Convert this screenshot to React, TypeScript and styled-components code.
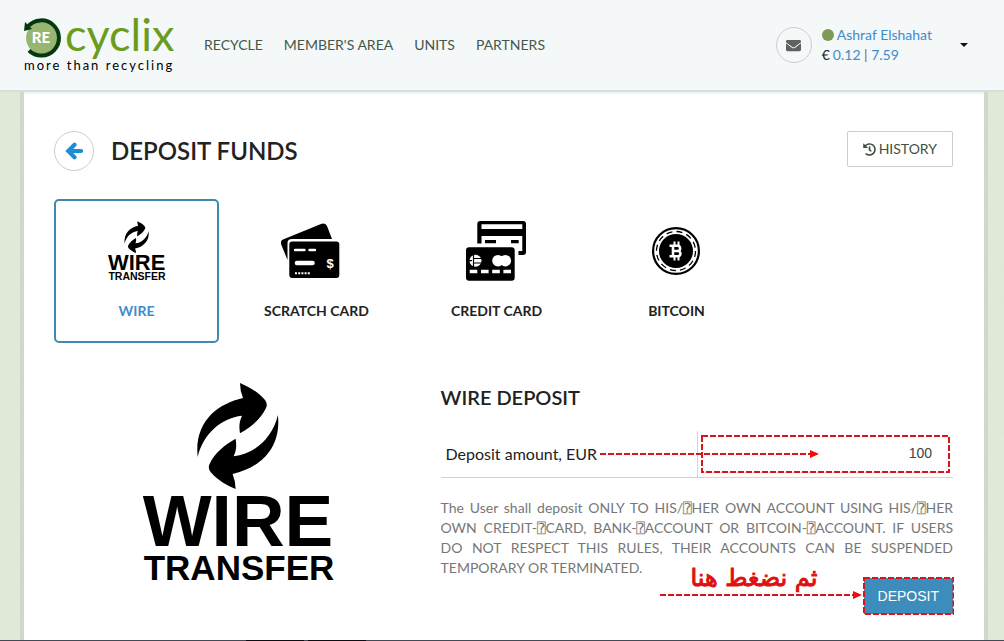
import React from "react";
import styled, { createGlobalStyle } from "styled-components";
import { FaEnvelope, FaHistory } from "react-icons/fa";

const GlobalStyle = createGlobalStyle`
  * { box-sizing: border-box; }
  body {
    margin: 0;
    font-family: Lato, "Liberation Sans", sans-serif;
    font-size: 14px;
    line-height: 20px;
    color: #222;
    background: #e1e8d9;
  }
  a { text-decoration: none; }
  button, input { font: inherit; }
`;

const Page = styled.div`
  min-height: 100vh;
  display: flex;
  flex-direction: column;
  background: repeating-linear-gradient(50deg, #e0e8d8 0 7px, #e2e9db 11px 16px, #dfe7d6 21px);
`;

const Header = styled.header`
  display: flex;
  align-items: center;
  height: 92px;
  padding: 0 36px 0 24px;
  background: #f4f8f9;
  border-bottom: 2px solid #d3dfe0;
`;

const LogoLink = styled.a`
  display: block;
  flex: none;
  width: 152px;
  height: 58px;
`;

const Nav = styled.nav`
  display: flex;
  gap: 21px;
  margin-left: 28px;
  flex: 1;
`;

const NavLink = styled.a`
  color: #44574a;
  white-space: nowrap;
`;

const RoundButton = styled.button<{ $size: number; $color: string }>`
  display: flex;
  align-items: center;
  justify-content: center;
  flex: none;
  width: ${(p) => p.$size}px;
  height: ${(p) => p.$size}px;
  padding: 0;
  border: 1px solid #ccc;
  border-radius: 50%;
  background: transparent;
  color: ${(p) => p.$color};
`;

const Account = styled.div`
  margin: 0 28px 0 10px;
  white-space: nowrap;
`;

const AccountLine = styled.div`
  display: flex;
  align-items: center;
  gap: 3px;
  a { color: #428bca; }
`;

const StatusDot = styled.span`
  width: 12px;
  height: 12px;
  border-radius: 50%;
  background: #7f9a55;
`;

const Divider = styled.span`
  color: #8a5a78;
`;

const CaretButton = styled.button`
  padding: 0;
  border: 0;
  background: none;
  display: flex;
  color: #111;
`;

const Main = styled.main`
  flex: 1;
  margin: 0 16px 0 20px;
  border: solid #d0d8c9;
  border-width: 0 4px;
  padding: 39px 31px 24px 30px;
  background: linear-gradient(#f1f3f3 0 2px, #fff 2px);
`;

const TitleBar = styled.div`
  display: flex;
  align-items: flex-start;
  gap: 17px;
`;

const Title = styled.h1`
  flex: 1;
  margin: 0;
  font-size: 24px;
  line-height: 40px;
  font-weight: 600;
`;

const HistoryButton = styled.button`
  display: flex;
  align-items: center;
  gap: 3px;
  height: 36px;
  padding: 0 15px;
  border: 1px solid #ccc;
  border-radius: 2px;
  background: #fff;
  color: #3f5144;
`;

const Methods = styled.div`
  display: grid;
  grid-template-columns: repeat(5, minmax(0, 1fr));
  gap: 15px;
  margin-top: 28px;
  padding-right: 14px;
`;

const MethodButton = styled.button<{ $active?: boolean }>`
  display: flex;
  flex-direction: column;
  align-items: center;
  gap: 20px;
  height: 144px;
  padding: 20px 0;
  border: 2px solid ${(p) => (p.$active ? "#4088ad" : "transparent")};
  border-radius: 5px;
  background: #fff;
  color: ${(p) => (p.$active ? "#428bca" : "#222")};
  font-weight: 700;
  white-space: nowrap;
`;

const Details = styled.section`
  display: grid;
  grid-template-columns: 43% minmax(0, 1fr);
  margin-top: 39px;
`;

const Artwork = styled.div`
  display: flex;
  justify-content: center;
  padding-right: 16px;
`;

const SectionTitle = styled.h2`
  margin: 0 0 19px;
  font-size: 20px;
  line-height: 30px;
  font-weight: 600;
`;

const AmountRow = styled.div`
  position: relative;
  display: grid;
  grid-template-columns: minmax(0, 1fr) 255px;
  height: 47px;
  border-bottom: 1px solid #d4d4d4;
`;

const AmountLabel = styled.label`
  padding-left: 5px;
  border-right: 1px solid #d4d4d4;
  font-size: 16px;
  line-height: 46px;
`;

const AmountCell = styled.div`
  position: relative;
  margin: 4px 3px;
`;

const AmountInput = styled.input`
  width: 100%;
  height: 100%;
  padding: 0 18px 2px 0;
  border: 0;
  border-bottom: 1px solid #ddd;
  background: transparent;
  color: #444;
  font-family: "Liberation Sans", Arial, sans-serif;
  text-align: right;
  outline: none;
`;

const Notice = styled.p`
  margin: 20px 0 0;
  font-family: Lato, "DejaVu Sans Mono", sans-serif;
  color: #777;
  text-align: justify;
`;

const Actions = styled.div`
  position: relative;
  display: flex;
  justify-content: flex-end;
`;

const SubmitWrap = styled.div`
  position: relative;
`;

const SubmitButton = styled.button`
  display: block;
  height: 36px;
  padding: 0 14px;
  border: 0;
  background: #3c8dbc;
  color: #fff;
  font-family: "Liberation Sans", Arial, sans-serif;
`;

const Outline = styled.svg<{ $spread: number }>`
  position: absolute;
  top: -${(p) => p.$spread}px;
  left: -${(p) => p.$spread}px;
  width: calc(100% + ${(p) => p.$spread * 2}px);
  height: calc(100% + ${(p) => p.$spread * 2}px);
  pointer-events: none;
  rect {
    width: calc(100% - 2px);
    height: calc(100% - 2px);
  }
`;

const AmountArrow = styled.div`
  position: absolute;
  left: 159px;
  top: 18px;
  display: flex;
  pointer-events: none;
`;

const SubmitHint = styled.div`
  position: absolute;
  right: 91px;
  bottom: 14px;
  display: flex;
  flex-direction: column;
  align-items: center;
  pointer-events: none;
`;

const HintText = styled.span`
  padding-right: 14px;
  font-family: "DejaVu Sans", sans-serif;
  font-size: 24px;
  line-height: 24px;
  color: #e01010;
  -webkit-text-stroke: 1px #e01010;
  white-space: nowrap;
`;

const BottomEdge = styled.footer`
  display: flex;
  gap: 4px;
  height: 1px;
  padding-left: 246px;
  background: #434a57;
`;

const EdgeItem = styled.span`
  width: 58px;
  background: #0c0b12;
`;

const DashedOutline = ({ spread = 0 }: { spread?: number }) => (
  <Outline $spread={spread} aria-hidden="true">
    <rect x="1" y="1" fill="none" stroke="#d8151b" strokeWidth="2" strokeDasharray="6 2" />
  </Outline>
);

const DashedArrow = ({ length }: { length: number }) => (
  <svg width={length} height="10" aria-hidden="true">
    <line x1="0" y1="5" x2={length - 8} y2="5" stroke="#d8151b" strokeWidth="2" strokeDasharray="6 2" />
    <path d={`M${length - 9} 1L${length} 5L${length - 9} 9Z`} fill="#f50808" />
  </svg>
);

const Logo = () => (
  <svg width="152" height="60" overflow="visible" role="img" aria-label="Recyclix, more than recycling">
    <circle cx="18" cy="22" r="16" fill="#98b672" />
    <path d="M4 10.500A17.600 17.600 0 1 1 5 34.500" fill="none" stroke="#06380f" strokeWidth="4" />
    <path d="M1 6L0 15L8 13Z" fill="#06380f" />
    <text x="17" y="27" textAnchor="middle" fontFamily="Lato, sans-serif" fontSize="15" fontWeight="900" fill="#fff">RE</text>
    <text x="41" y="35" fontFamily="Lato, sans-serif" fontSize="45" fill="#6c9c1f">cyclix</text>
    <text x="0" y="54" fontFamily="Lato, sans-serif" fontSize="13" letterSpacing="2" fill="#000">more than recycling</text>
  </svg>
);

const BackArrow = () => (
  <svg width="18" height="18" viewBox="0 0 18 18" aria-hidden="true">
    <path d="M16 9H4M9.500 2.800L3.300 9L9.500 15.200" fill="none" stroke="currentColor" strokeWidth="4.200" strokeLinecap="round" />
  </svg>
);

const SWOOSH =
  "M101 1Q101 9 104 16C78 22 55 40 58.7 75C64 52 82 36 103 33.7C100 40 100 45 101 51.3C112 45 122 37 127 26Q129 22 126 18C118 9 110 5 101 1Z";

const WireTransferArt = ({ size }: { size: number }) => (
  <svg width={size} height={size} viewBox="0 0 200 200" overflow="visible" role="img" aria-label="Wire transfer">
    <path d={SWOOSH} />
    <path d={SWOOSH} transform="rotate(180 98.8 54)" />
    <g fontFamily="'Liberation Sans', Arial, sans-serif" fontWeight="700" textAnchor="middle">
      <text x="99" y="164" fontSize="73">WIRE</text>
      <text x="100" y="198" fontSize="35">TRANSFER</text>
    </g>
  </svg>
);

const WireIcon = () => <WireTransferArt size={60} />;

const ScratchIcon = () => (
  <svg width="72" height="60" viewBox="1 0 72 60" aria-hidden="true">
    <path d="M1 23Q0 20 3 18.600L41 3Q45 1.500 47 5L52 18H12Q7.500 18 7.500 22V39Z" />
    <rect x="9.300" y="20.500" width="50" height="36.500" rx="3" />
    <g stroke="#fff" strokeLinecap="round">
      <path d="M15 29H24.500M29.500 29H35" strokeWidth="2.400" />
      <path d="M17 42H32.500" strokeWidth="4.600" />
    </g>
    <path d="M15 52.300H30" stroke="#fff" strokeWidth="2" strokeDasharray="2 1.200" />
    <text x="50" y="47" textAnchor="middle" fontFamily="'Liberation Sans', sans-serif" fontWeight="700" fontSize="13" fill="#fff">$</text>
  </svg>
);

const CreditIcon = () => (
  <svg width="72" height="60" viewBox="1 0 72 60" aria-hidden="true">
    <path
      fillRule="evenodd"
      d="M20.300 0H63Q66 0 66 3V31Q66 34 63 34H58.500V30H62.300V15H21.500V22.500H17.300V3Q17.300 0 20.300 0ZM21.500 3.300V8H62.300V3.300Z"
    />
    <path d="M25 19h11v3.300h-11zM51 19h7.700v3.300h-7.700z" />
    <rect x="6" y="26.300" width="48.700" height="33.500" rx="3" />
    <circle cx="15.500" cy="39.700" r="6" fill="#fff" />
    <path d="M13.500 33.500V46M13.500 37.500H21.500M13.500 42H21.500M9 39.700H12" stroke="#000" strokeWidth="1.200" />
    <circle cx="38" cy="39.700" r="5.800" fill="#fff" />
    <circle cx="45.300" cy="39.700" r="5.800" fill="#fff" />
    <path d="M9.700 48.700h7.600v3.600h-7.600zM21 48.700h7.600v3.600h-7.600zM32.200 48.700h7.600v3.600h-7.600zM43.400 48.700h7.600v3.600h-7.600z" fill="#fff" />
  </svg>
);

const BitcoinIcon = () => (
  <svg width="72" height="60" viewBox="1 0 72 60" aria-hidden="true">
    <circle cx="36" cy="30" r="22.900" fill="#fff" stroke="#000" strokeWidth="2.200" />
    <circle cx="36" cy="30" r="19.500" fill="none" stroke="#000" strokeWidth="1.300" strokeDasharray="6 4.200" />
    <circle cx="36" cy="30" r="17" />
    <g fill="none" stroke="#fff">
      <path d="M34.500 20.500V24.500M38.500 20.500V24.500M34.500 35.500V39.500M38.500 35.500V39.500" strokeWidth="2" />
      <path d="M29.500 24.800H37.500A2.500 2.500 0 0 1 37.500 30H33.500M37.500 30A2.600 2.600 0 0 1 38 35.300H29.500M33 24V36" strokeWidth="2.600" />
    </g>
  </svg>
);

const methods = [
  { label: "WIRE", Icon: WireIcon, active: true },
  { label: "SCRATCH CARD", Icon: ScratchIcon },
  { label: "CREDIT CARD", Icon: CreditIcon },
  { label: "BITCOIN", Icon: BitcoinIcon },
];

export default function App() {
  return (
    <Page>
      <GlobalStyle />
      <Header>
        <LogoLink href="#"><Logo /></LogoLink>
        <Nav>
          {["RECYCLE", "MEMBER'S AREA", "UNITS", "PARTNERS"].map((item) => (
            <NavLink key={item} href="#">{item}</NavLink>
          ))}
        </Nav>
        <RoundButton $size={36} $color="#5f6060" aria-label="Messages">
          <FaEnvelope size={15} />
        </RoundButton>
        <Account>
          <AccountLine>
            <StatusDot />
            <a href="#">Ashraf Elshahat</a>
          </AccountLine>
          <AccountLine>
            <span>€</span>
            <a href="#">0.12 <Divider>|</Divider> 7.59</a>
          </AccountLine>
        </Account>
        <CaretButton aria-label="Account menu">
          <svg width="8" height="4"><path d="M0 0H8L4 4Z" fill="currentColor" /></svg>
        </CaretButton>
      </Header>

      <Main>
        <TitleBar>
          <RoundButton $size={40} $color="#1f8dd6" aria-label="Back">
            <BackArrow />
          </RoundButton>
          <Title>DEPOSIT FUNDS</Title>
          <HistoryButton>
            <FaHistory size={13} />
            HISTORY
          </HistoryButton>
        </TitleBar>

        <Methods>
          {methods.map(({ label, Icon, active }) => (
            <MethodButton key={label} $active={active}>
              <Icon />
              {label}
            </MethodButton>
          ))}
        </Methods>

        <Details>
          <Artwork><WireTransferArt size={200} /></Artwork>
          <div>
            <SectionTitle>WIRE DEPOSIT</SectionTitle>
            <AmountRow>
              <AmountLabel htmlFor="amount">Deposit amount, EUR</AmountLabel>
              <AmountCell>
                <AmountInput id="amount" defaultValue="100" />
                <DashedOutline />
              </AmountCell>
              <AmountArrow><DashedArrow length={219} /></AmountArrow>
            </AmountRow>
            <Notice>
              The User shall deposit ONLY TO HIS/⍰HER OWN ACCOUNT USING HIS/⍰HER OWN
              CREDIT-⍰CARD, BANK-⍰ACCOUNT OR BITCOIN-⍰ACCOUNT. IF USERS DO NOT RESPECT
              THIS RULES, THEIR ACCOUNTS CAN BE SUSPENDED TEMPORARY OR TERMINATED.
            </Notice>
            <Actions>
              <SubmitHint>
                <HintText lang="ar" dir="rtl">ثم نضغط هنا</HintText>
                <DashedArrow length={202} />
              </SubmitHint>
              <SubmitWrap>
                <SubmitButton>DEPOSIT</SubmitButton>
                <DashedOutline spread={1} />
              </SubmitWrap>
            </Actions>
          </div>
        </Details>
      </Main>
      <BottomEdge>
        <EdgeItem />
        <EdgeItem />
      </BottomEdge>
    </Page>
  );
}
